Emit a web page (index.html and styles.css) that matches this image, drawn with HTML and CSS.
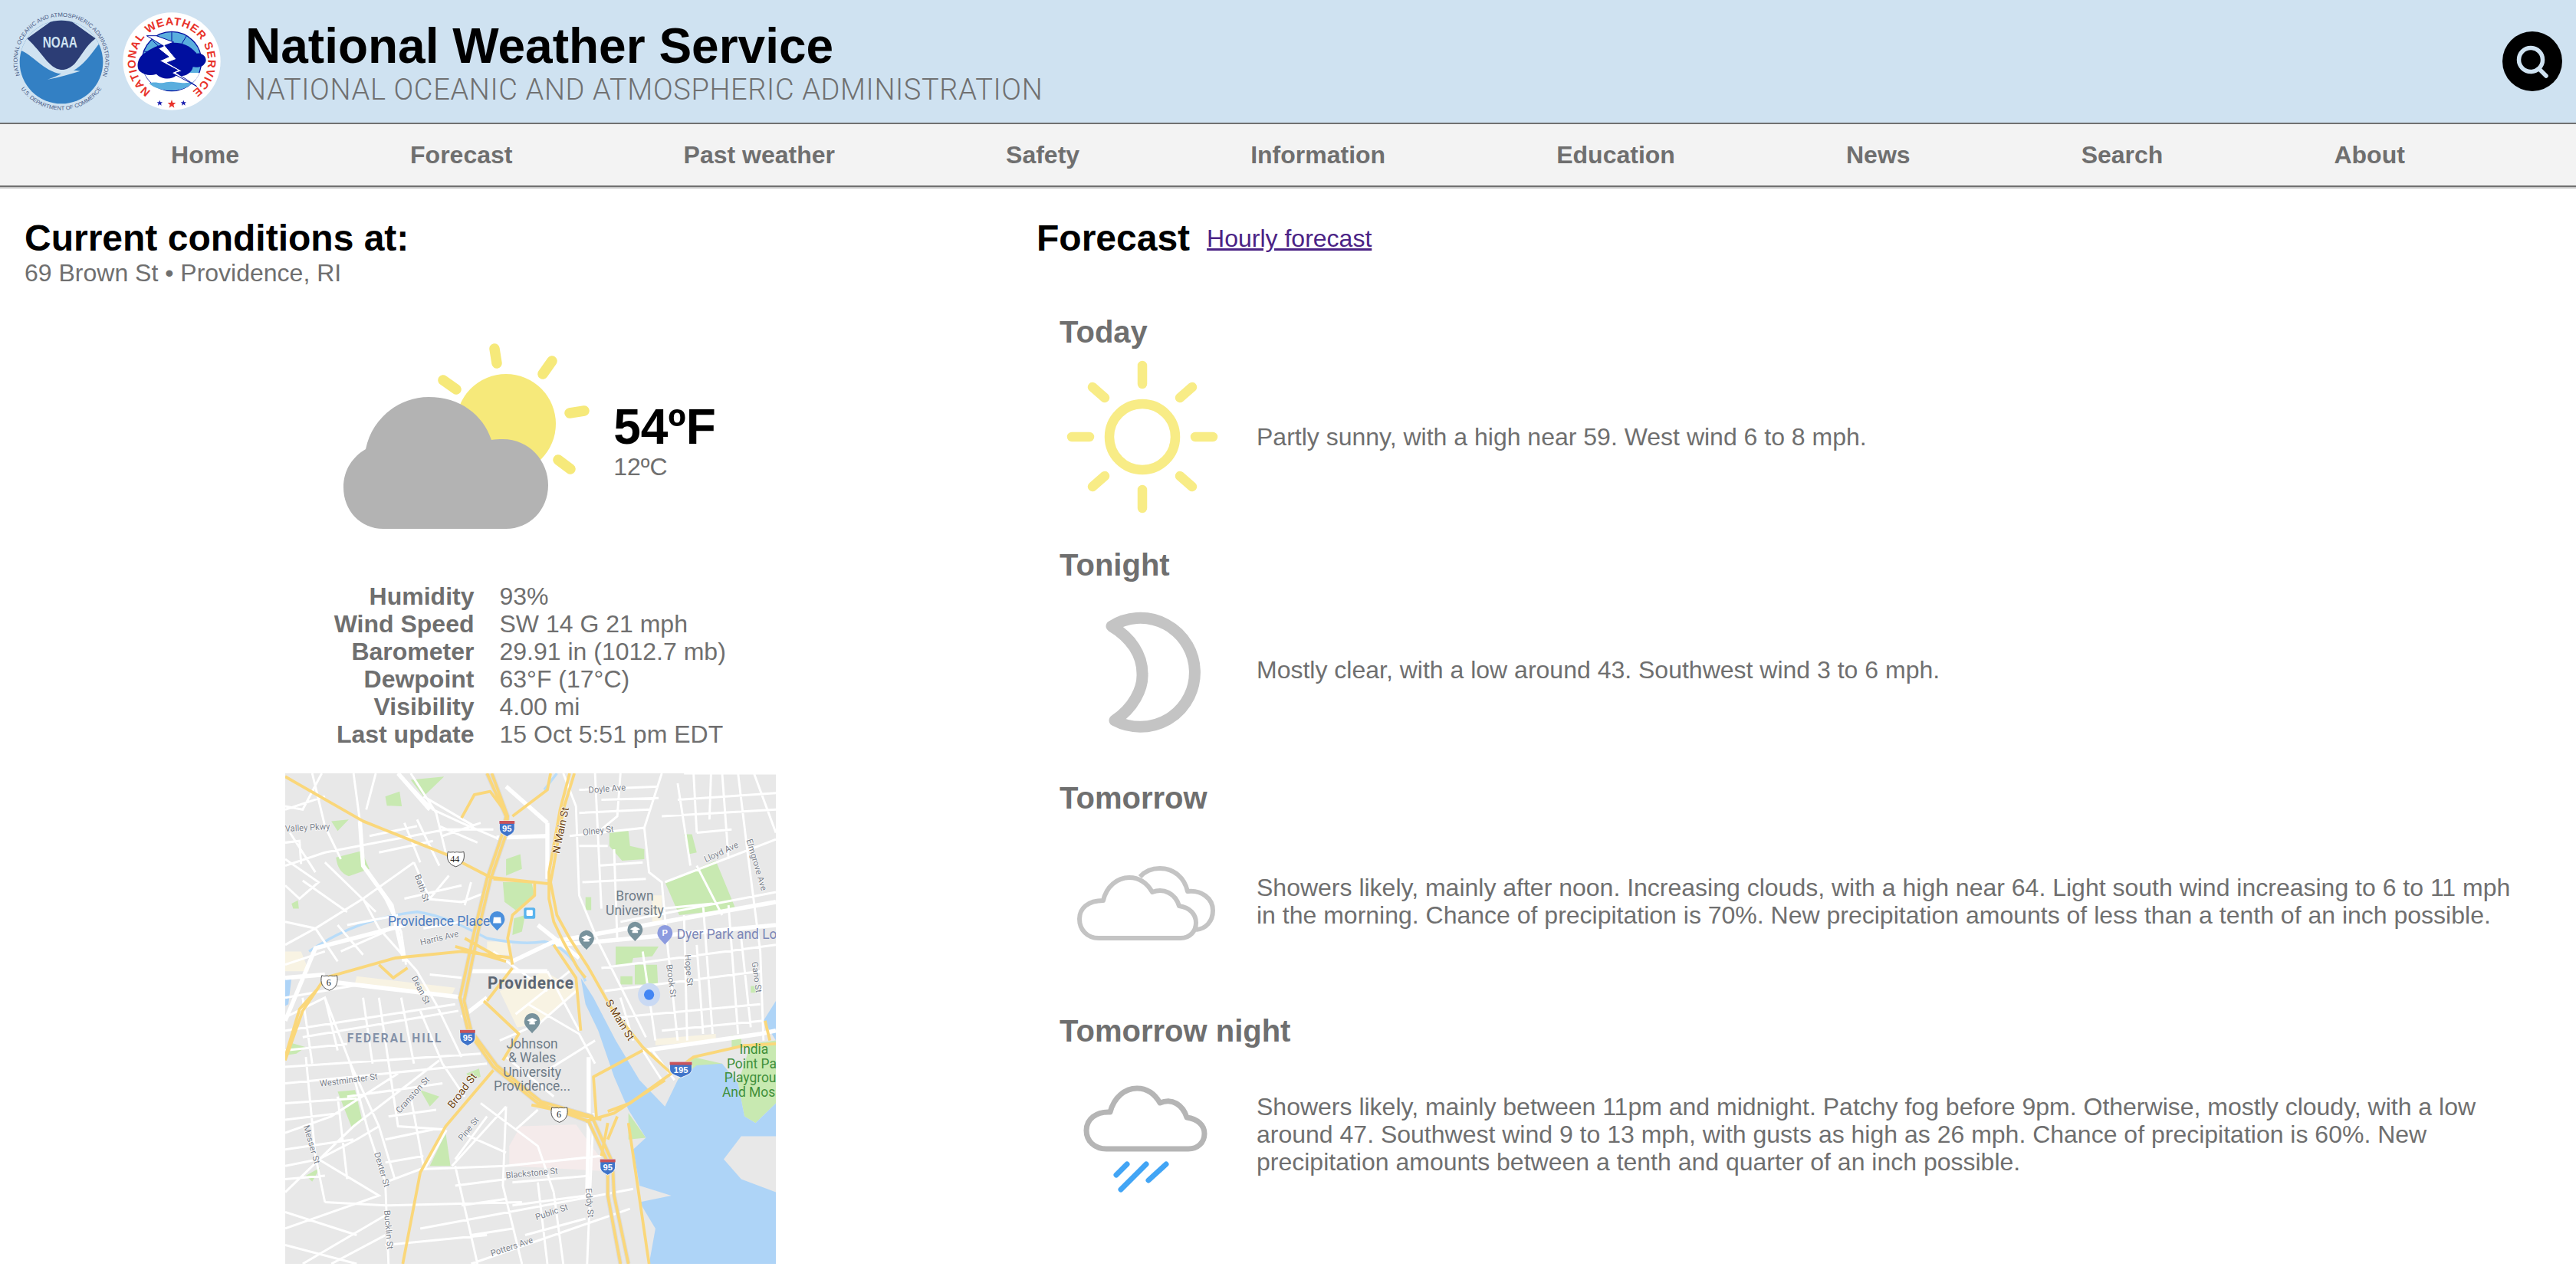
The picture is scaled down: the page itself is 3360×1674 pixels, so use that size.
FILE: index.html
```html
<!DOCTYPE html>
<html lang="en">
<head>
    <meta charset="UTF-8">
    <meta name="viewport" content="width=device-width, initial-scale=1.0">
    <title>National Weather Service</title>
    <link rel="stylesheet" href="styles.css">
</head>
<body>
    <!-- Blue banner with the two seals -->
    <header class="banner">
        <svg class="logo-noaa" viewBox="30 25 420 420">
            <defs>
                <path id="noaaTop" d="M78 290 A172 172 0 1 1 402 290"/>
                <path id="noaaBottom" d="M65 310 A190 190 0 0 0 415 310"/>
                <clipPath id="noaaDisc"><circle cx="240" cy="238" r="163"/></clipPath>
            </defs>
            <g clip-path="url(#noaaDisc)">
                <rect class="noaa-blue" x="60" y="60" width="360" height="360"/>
                <path class="noaa-light" d="M70 200 L80 192 C125 205 170 275 240 284 C310 280 350 215 388 166 L420 60 L60 60Z"/>
                <path class="noaa-navy" d="M106 146 L240 50 L374 146 C335 175 318 215 292 245 C275 262 255 270 238 268 C190 262 170 205 106 146Z"/>
                <path class="noaa-light" d="M186 306 C230 298 275 285 314 273 L272 268 L240 283 C225 292 205 300 186 306Z"/>
            </g>
            <text class="noaa-name" x="235" y="182" textLength="136" lengthAdjust="spacingAndGlyphs">NOAA</text>
            <text class="noaa-ring"><textPath href="#noaaTop" textLength="660" lengthAdjust="spacingAndGlyphs">NATIONAL OCEANIC AND ATMOSPHERIC ADMINISTRATION</textPath></text>
            <text class="noaa-ring"><textPath href="#noaaBottom" startOffset="50%" text-anchor="middle">U.S. DEPARTMENT OF COMMERCE</textPath></text>
        </svg>
        <svg class="logo-nws" viewBox="480 48 384 384">
            <defs>
                <path id="nwsRing" d="M591 357 A142 142 0 1 1 753 357"/>
            </defs>
            <circle class="nws-white" cx="672" cy="240" r="191"/>
            <circle class="nws-sky" cx="672" cy="240" r="116"/>
            <path class="nws-white" d="M565 285 L780 285 C770 320 725 354 672 354 C620 354 578 320 565 285Z"/>
            <path class="nws-sky-flat" d="M583 326 C610 316 625 330 650 322 C680 315 700 330 755 322 C735 345 705 354 672 354 C635 354 605 345 583 326Z"/>
            <path class="nws-spoke" d="M672 124 V180 M730 140 L700 190 M596 158 L640 200 M560 200 L620 210 M785 210 L720 215"/>
            <path class="nws-navy" d="M560 212 C590 190 620 175 650 172 C690 160 740 170 770 210 C800 205 815 235 800 250 C790 265 770 265 755 262 C750 290 715 305 690 295 C670 315 630 310 612 290 C590 298 565 295 548 280 C530 265 540 225 560 212Z"/>
            <path class="nws-bolt" d="M574 140 L612 140 L680 165 L645 178 L690 232 L655 245 L712 278 L690 285 L770 338 L672 285 L695 275 L625 238 L660 222 L620 190 L640 180Z"/>
            <text class="nws-name"><textPath href="#nwsRing" textLength="720" lengthAdjust="spacing">NATIONAL WEATHER SERVICE</textPath></text>
            <path class="nws-star-blue" d="M625 392 L628 400 L636 400 L630 405 L632 413 L625 408 L618 413 L620 405 L614 400 L622 400Z"/>
            <path class="nws-star-blue" d="M718 392 L721 400 L729 400 L723 405 L725 413 L718 408 L711 413 L713 405 L707 400 L715 400Z"/>
            <path class="nws-star-red" d="M672 390 L676 402 L688 402 L679 410 L682 422 L672 415 L662 422 L665 410 L656 402 L668 402Z"/>
        </svg>
        <div class="banner-text">
            <div class="site-title">National Weather Service</div>
            <div class="site-sub">NATIONAL OCEANIC AND ATMOSPHERIC ADMINISTRATION</div>
        </div>
        <a class="search-btn" href="#">
            <svg viewBox="0 0 78 78">
                <circle class="search-disc" cx="39" cy="39" r="39"/>
                <circle class="search-glass" cx="37" cy="37" r="15.5"/>
                <path class="search-glass" d="M48 49 L57 58"/>
            </svg>
        </a>
    </header>

    <!-- Main navigation -->
    <nav class="main-nav">
        <a href="#">Home</a>
        <a href="#">Forecast</a>
        <a href="#">Past weather</a>
        <a href="#">Safety</a>
        <a href="#">Information</a>
        <a href="#">Education</a>
        <a href="#">News</a>
        <a href="#">Search</a>
        <a href="#">About</a>
    </nav>

    <main class="page">
        <!-- Current conditions column -->
        <section class="current">
            <h2>Current conditions at:</h2>
            <div class="place">69 Brown St • Providence, RI</div>

            <div class="now">
                <svg class="now-icon" viewBox="446 440 334 270">
                    <circle class="sun-fill" cx="660" cy="552" r="65"/>
                    <path class="sun-ray-big" d="M645 454 L648 473 M720 470 L708 487 M743 538 L762 535 M728 599 L744 611 M578 495 L595 507"/>
                    <path class="cloud-fill" d="M500 689 C470 689 448 665 448 635 C448 612 460 595 477 585 C485 545 520 517 559 517 C600 517 630 540 641 573 C646 572 650 572 656 572 C690 572 715 600 715 632 C715 665 690 689 660 689Z"/>
                </svg>
                <div>
                    <div class="temp-f">54ºF</div>
                    <div class="temp-c">12ºC</div>
                </div>
            </div>

            <div class="stats">
                <div class="stat-label">Humidity</div><div>93%</div>
                <div class="stat-label">Wind Speed</div><div>SW 14 G 21 mph</div>
                <div class="stat-label">Barometer</div><div>29.91 in (1012.7 mb)</div>
                <div class="stat-label">Dewpoint</div><div>63°F (17°C)</div>
                <div class="stat-label">Visibility</div><div>4.00 mi</div>
                <div class="stat-label">Last update</div><div>15 Oct 5:51 pm EDT</div>
            </div>

            <svg class="map" viewBox="5 20 1544 1487" preserveAspectRatio="none">
                <rect class="map-land" x="5" y="20" width="1544" height="1487"/>
                <!-- parks -->
                <path class="map-park" d="M400 40 L505 30 L440 90Z M320 90 L365 75 L372 120 L325 118Z M165 275 L245 255 L270 310 L205 332 Q170 320 165 275Z M150 165 L205 160 L170 195Z M25 415 L45 405 L48 430 L30 430Z M700 280 L745 265 L750 310 L700 330Z M690 350 L780 350 L790 390 L730 435 L695 410Z M725 460 L760 450 L750 500 L720 510Z M950 395 L968 395 L968 435 L950 435Z M1025 195 L1085 195 L1090 240 L1135 250 L1135 280 L1065 285 L1025 240Z M1260 205 L1285 205 L1300 260 L1275 265Z M1200 350 L1360 285 L1422 430 L1245 450Z M1045 545 L1180 545 L1160 575 L1100 580 L1095 600 L1045 600Z M1105 600 L1175 600 L1178 660 L1105 660Z M1060 635 L1098 635 L1098 660 L1060 660Z M1470 665 L1490 665 L1490 685 L1470 685Z M15 835 L70 850 L40 870 L5 875Z M170 985 L225 980 L248 1075 L215 1095Z M430 980 L490 1000 L460 1030Z M575 930 L615 915 L620 940 L590 950Z M1085 1050 L1140 1125 L1085 1130Z M460 1210 L510 1110 L525 1210Z M70 1240 L115 1215 L90 1258Z M1410 815 L1440 815 L1440 850 L1410 850Z M1290 880 L1380 900 L1300 935 L1240 950Z M1470 840 L1549 830 L1549 1020 L1485 1080 L1450 1060 L1430 960Z"/>
                <!-- downtown and campus tint -->
                <path class="map-tint" d="M5 560 L55 560 L80 620 L5 620Z M230 635 L540 670 L530 690 L225 655Z M640 530 L720 530 L710 570 L640 570Z M680 680 L820 620 L930 680 L800 780 L735 790Z M1160 390 L1190 390 L1190 470 L1160 470Z M1170 825 L1360 810 L1360 830 L1170 845Z"/>
                <path class="map-pink" d="M745 1090 L920 1085 L1000 1190 L1000 1225 L710 1210 L710 1150Z"/>
                <!-- water -->
                <path class="map-water" d="M935 640 L975 700 L1045 830 L1120 950 L1200 1030 L1240 950 L1300 905 L1380 900 L1430 960 L1450 1060 L1485 1080 L1549 1020 L1549 1120 L1440 1120 L1385 1190 L1440 1250 L1549 1290 L1549 1507 L1150 1507 L1170 1400 L1120 1320 L1220 1300 L1120 1270 L1100 1160 L1140 1125 L1085 1040 L1040 940 L990 800 L950 720Z M1549 710 L1510 770 L1549 830Z M5 640 L25 640 L15 720 L5 725Z"/>
                <path class="map-land-shape" d="M1420 1200 L1480 1200 L1480 1235 L1430 1230Z"/>
                <path class="map-river" d="M80 560 C200 480 320 450 420 440 C500 450 580 490 640 520 C700 530 760 540 820 530 C880 540 920 590 950 650 M820 70 L860 20"/>
                <!-- ordinary streets -->
                <path class="map-street" d="M5 280 L110 350 L50 400 L5 360 M5 230 L50 225 L55 295 M120 20 L60 130 L5 120 M220 20 L240 165 L250 300 L320 400 L370 500 L385 600 M290 20 L260 130 M360 20 L470 130 L560 170 L680 220 M400 20 L480 140 L510 260 M5 300 L130 260 L510 190 L660 190 M5 470 L100 490 L250 400 L410 290 M60 345 L200 440 M130 290 L290 440 M250 400 L300 490 M410 290 L460 400 L520 330 M440 400 L560 410 L640 380 M590 350 L570 420 M5 540 L100 490 L170 590 M170 480 L250 570 M300 490 L420 620 L480 720 L560 880 M5 700 L240 660 L560 700 M5 760 L130 700 L210 900 L300 1090 L350 1250 M60 820 L550 740 M5 910 L620 870 M5 960 L320 930 L640 900 M5 1020 L230 1005 M70 880 L100 1180 L130 1320 M130 700 L170 860 M210 900 L265 1100 L320 1260 L330 1507 M300 700 L360 1090 L510 1100 M430 740 L500 900 L570 1000 M5 1110 L150 1060 L360 930 M5 1210 L110 1190 L300 1300 L5 1400 M5 1290 L220 1090 L490 890 M5 1350 L230 1420 M5 1450 L230 1507 M110 1190 L230 1130 L300 1090 M130 1320 L320 1330 L750 1320 M60 1507 L320 1360 M150 1507 L320 1420 M320 1450 L640 1420 M320 1260 L430 1220 L700 1210 L1000 1180 M540 1210 L610 1507 M700 1030 L690 1270 L750 1507 M620 1020 L800 1150 L850 1290 M640 1060 L540 1190 M700 1030 L530 1210 M560 1110 L700 1170 M730 1100 L800 1040 M430 1400 L1100 1280 M590 1507 L1090 1340 M850 1290 L880 1507 M700 880 L850 1000 M770 720 L930 810 L980 900 M830 620 L930 800 M730 750 L900 620 M780 800 L920 680 M680 830 L800 780 M830 920 L980 830 M660 560 L830 680 M880 20 L920 120 L930 390 L990 530 L1140 820 M1060 20 L1050 150 L1000 190 M930 70 L1180 60 M900 210 L1135 185 L1190 20 M1135 185 L1150 320 L1190 350 L1210 560 L1240 830 M1290 20 L1300 200 M1345 20 L1340 160 M1430 20 L1460 260 L1500 560 L1510 830 M1200 350 L1549 220 M1260 20 L1549 20 M1240 100 L1549 80 M1190 150 L1549 130 M1300 200 L1410 190 M990 300 L1130 290 M940 350 L1140 340 M930 240 L1020 240 M980 20 L1000 430 M1040 250 L1050 530 M1260 450 L1270 830 M1320 420 L1350 810 M1400 420 L1430 810 M1060 470 L1549 380 M1000 610 L1549 540 M1010 680 L1500 620 M1050 760 L1500 720 M1190 430 L1350 415 M1190 800 L1510 770 M1130 860 L1190 950 M1160 860 L1230 950 M975 1050 L955 1507 M5 800 L540 720 M5 860 L200 840 M200 1000 L500 960 M5 1070 L180 1050 M330 1060 L480 1040 M5 1160 L220 1130 M320 1130 L470 1100 M5 1250 L130 1240 M320 1200 L440 1180 M60 700 L90 900 M250 700 L280 900 M370 700 L410 900 M170 1000 L200 1250 M400 1000 L440 1210 M540 1270 L700 1250 M560 1330 L700 1310 M590 1420 L720 1400 M720 1260 L960 1240 M720 1330 L950 1300 M760 1420 L950 1370 M800 1260 L830 1507 M1000 100 L1180 95 M930 140 L1150 130 M1240 50 L1280 300 M1380 20 L1400 280 M1480 20 L1549 200 M1300 300 L1380 450 M1060 700 L1100 830 M1130 560 L1170 830 M1300 540 L1320 810 M1440 520 L1470 790 M5 130 L130 90 M90 20 L130 180 L180 280 M420 160 L490 300 M490 180 L610 230 M500 210 L620 170 M440 90 L600 180 M380 170 L430 290 M270 210 L420 180 M300 260 L470 225 M20 200 L100 320 M5 600 L130 560 M200 480 L360 450 M380 400 L560 360 M440 490 L560 470 M460 630 L560 640 M180 560 L320 500"/>
                <!-- wider city roads -->
                <path class="map-road" d="M240 165 L250 300 L340 420 L380 590 M670 215 L830 210 L830 340 M700 60 L830 170 M5 640 L130 630 M130 650 L570 700 M590 620 L830 620 M560 760 L640 700 M380 480 L100 550 L5 770 M800 480 L930 580 M720 590 L850 530 L1549 410 M850 540 L990 530 L1549 480 M460 130 L360 20 M830 170 L830 210 M1140 860 L1500 810 L1549 800 M960 880 L960 1100 L955 1300 M510 1100 L440 1220"/>
                <!-- highways -->
                <path class="map-hw-edge" d="M640 20 L700 150 L690 200 L640 340 L600 500 L555 700 L580 800 L660 910 L800 1020 L960 1075 L1020 1200 L1020 1300 L1060 1507 M655 20 L705 150 L700 205 L650 345 L612 500 L568 710 L590 800 L670 905 L810 1015 L970 1060 L1035 1200 L1040 1300 L1085 1507"/>
                <path class="map-hw" d="M640 20 L700 150 L690 200 L640 340 L600 500 L555 700 L580 800 L660 910 L800 1020 L960 1075 L1020 1200 L1020 1300 L1060 1507 M655 20 L705 150 L700 205 L650 345 L612 500 L568 710 L590 800 L670 905 L810 1015 L970 1060 L1035 1200 L1040 1300 L1085 1507 M915 20 L880 130 L850 300 L840 350 L860 450 L900 520 L960 610 L1030 730 L1130 850 L1220 930 M900 20 L870 130 L835 320 L835 400 L850 470 L880 530 L925 610 L950 640 M1085 1080 L1150 1507 M5 30 L250 165 L510 265 L650 335 L835 355 M5 890 L60 740 L130 640 L350 580 L560 560 L720 580 M5 880 L50 735 L110 670 M300 600 L345 640 L390 610 M375 1507 L430 1230 L510 1090 L660 920 M1020 1045 L1090 1020 L1220 930 L1290 880 L1450 845 L1549 840 M985 1070 L975 940 L1130 860 M950 1075 L1040 1050 L1120 1000 L1200 950 M630 710 L740 810 L690 890 M720 610 L640 710 M660 340 L790 350 L790 390 L720 450 L705 520 L720 600 M840 20 L830 70 L720 150 M560 155 L600 85 L650 75 L700 140 M850 540 L920 640 L935 800 M540 545 L700 590 M570 520 L680 580 M1020 1080 L1000 1180 M1050 1060 L1020 1130 M780 1025 L1000 1070 M1515 770 L1530 830"/>
                <!-- labels -->
                <text class="map-label" x="5" y="197" transform="rotate(-3 5 197)">Valley Pkwy</text>
                <text class="map-label" x="960" y="80" transform="rotate(-4 960 80)">Doyle Ave</text>
                <text class="map-label" x="942" y="208" transform="rotate(-6 942 208)">Olney St</text>
                <text class="map-label" x="1328" y="290" transform="rotate(-24 1328 290)">Lloyd Ave</text>
                <text class="map-label" x="1456" y="222" transform="rotate(73 1456 222)">Elmgrove Ave</text>
                <text class="map-label" x="412" y="330" transform="rotate(70 412 330)">Bath St</text>
                <text class="map-label" x="432" y="542" transform="rotate(-13 432 542)">Harris Ave</text>
                <text class="map-label" x="402" y="640" transform="rotate(62 402 640)">Dean St</text>
                <text class="map-label" x="1204" y="600" transform="rotate(82 1204 600)">Brook St</text>
                <text class="map-label" x="1262" y="570" transform="rotate(85 1262 570)">Hope St</text>
                <text class="map-label" x="1473" y="592" transform="rotate(82 1473 592)">Gano St</text>
                <text class="map-label" x="115" y="970" transform="rotate(-7 115 970)">Westminster St</text>
                <text class="map-label" x="365" y="1052" transform="rotate(-47 365 1052)">Cranston St</text>
                <text class="map-label" x="62" y="1090" transform="rotate(73 62 1090)">Messer St</text>
                <text class="map-label" x="285" y="1172" transform="rotate(73 285 1172)">Dexter St</text>
                <text class="map-label" x="316" y="1345" transform="rotate(85 316 1345)">Bucklin St</text>
                <text class="map-label" x="562" y="1136" transform="rotate(-50 562 1136)">Pine St</text>
                <text class="map-label" x="700" y="1248" transform="rotate(-5 700 1248)">Blackstone St</text>
                <text class="map-label" x="796" y="1375" transform="rotate(-18 796 1375)">Public St</text>
                <text class="map-label" x="655" y="1485" transform="rotate(-18 655 1485)">Potters Ave</text>
                <text class="map-label" x="950" y="1278" transform="rotate(85 950 1278)">Eddy St</text>
                <text class="map-road-label" x="868" y="265" transform="rotate(-78 868 265)">N Main St</text>
                <text class="map-road-label" x="1012" y="715" transform="rotate(58 1012 715)">S Main St</text>
                <text class="map-road-label" x="532" y="1038" transform="rotate(-52 532 1038)">Broad St</text>
                <text class="map-city" x="642" y="672">Providence</text>
                <text class="map-district" x="200" y="836">FEDERAL HILL</text>
                <text class="map-poi-blue" x="328" y="482">Providence Place</text>
                <text class="map-poi-gray" x="1105" y="405">Brown</text>
                <text class="map-poi-gray" x="1105" y="449">University</text>
                <text class="map-poi-gray" x="782" y="855">Johnson</text>
                <text class="map-poi-gray" x="782" y="897">&amp; Wales</text>
                <text class="map-poi-gray" x="782" y="941">University</text>
                <text class="map-poi-gray" x="782" y="983">Providence...</text>
                <text class="map-poi-violet" x="1237" y="522">Dyer Park and Loc</text>
                <text class="map-poi-green" x="1480" y="870">India</text>
                <text class="map-poi-green" x="1480" y="914">Point Par</text>
                <text class="map-poi-green" x="1480" y="957">Playgroun</text>
                <text class="map-poi-green" x="1480" y="1000">And Mosai</text>
                <!-- shields -->
                <g transform="translate(703 186)"><path class="shield-blue" d="M-24 -22 H24 V0 C24 16 10 20 0 26 C-10 20 -24 16 -24 0Z"/><path class="shield-red" d="M-24 -22 H24 V-13 H-24Z"/><text class="shield-num" y="11">95</text></g>
                <g transform="translate(579 820)"><path class="shield-blue" d="M-24 -22 H24 V0 C24 16 10 20 0 26 C-10 20 -24 16 -24 0Z"/><path class="shield-red" d="M-24 -22 H24 V-13 H-24Z"/><text class="shield-num" y="11">95</text></g>
                <g transform="translate(1020 1212)"><path class="shield-blue" d="M-24 -22 H24 V0 C24 16 10 20 0 26 C-10 20 -24 16 -24 0Z"/><path class="shield-red" d="M-24 -22 H24 V-13 H-24Z"/><text class="shield-num" y="11">95</text></g>
                <g transform="translate(1250 917)"><path class="shield-blue" d="M-35 -22 H35 V0 C35 16 12 20 0 26 C-12 20 -35 16 -35 0Z"/><path class="shield-red" d="M-35 -22 H35 V-13 H-35Z"/><text class="shield-num" y="11">195</text></g>
                <g transform="translate(539 280)"><path class="shield-white" d="M-22 -22 C-12 -18 -6 -24 0 -20 C6 -24 12 -18 28 -22 C32 0 26 16 3 23 C-20 16 -28 0 -22 -22Z"/><text class="shield-us" y="9">44</text></g>
                <g transform="translate(142 655)"><path class="shield-white" d="M-22 -22 C-12 -18 -6 -24 0 -20 C6 -24 12 -18 26 -22 C30 0 24 16 2 23 C-20 16 -28 0 -22 -22Z"/><text class="shield-us" y="9">6</text></g>
                <g transform="translate(866 1055)"><path class="shield-white" d="M-22 -22 C-12 -18 -6 -24 0 -20 C6 -24 12 -18 26 -22 C30 0 24 16 2 23 C-20 16 -28 0 -22 -22Z"/><text class="shield-us" y="9">6</text></g>
                <!-- pins -->
                <path class="pin-blue" d="M672 438 A24 24 0 0 1 696 462 C696 476 682 486 672 497 C662 486 648 476 648 462 A24 24 0 0 1 672 438Z"/>
                <path class="pin-mark" d="M661 456 H683 L685 474 H659Z"/>
                <rect class="pin-transit" x="756" y="427" width="36" height="34" rx="6"/>
                <rect class="pin-mark" x="764" y="434" width="20" height="18" rx="3"/>
                <path class="pin-teal" d="M953 496 A24 24 0 0 1 977 520 C977 534 963 544 953 555 C943 544 929 534 929 520 A24 24 0 0 1 953 496Z"/>
                <path class="pin-mark" d="M953 510 L969 518 L953 526 L937 518Z M944 524 H962 V530 H944Z"/>
                <path class="pin-teal" d="M1106 470 A24 24 0 0 1 1130 494 C1130 508 1116 518 1106 529 C1096 518 1082 508 1082 494 A24 24 0 0 1 1106 470Z"/>
                <path class="pin-mark" d="M1106 484 L1122 492 L1106 500 L1090 492Z M1097 498 H1115 V504 H1097Z"/>
                <path class="pin-teal" d="M782 747 A25 25 0 0 1 807 772 C807 786 792 796 782 808 C772 796 757 786 757 772 A25 25 0 0 1 782 747Z"/>
                <path class="pin-mark" d="M782 761 L798 769 L782 777 L766 769Z M773 775 H791 V781 H773Z"/>
                <path class="pin-violet" d="M1200 480 A24 24 0 0 1 1224 504 C1224 518 1210 528 1200 539 C1190 528 1176 518 1176 504 A24 24 0 0 1 1200 480Z"/>
                <text class="pin-p" x="1200" y="513">P</text>
                <circle class="here-halo" cx="1150" cy="691" r="35"/>
                <circle class="here-dot" cx="1150" cy="691" r="16"/>
            </svg>
        </section>

        <!-- Forecast column -->
        <section class="forecast">
            <div class="forecast-head">
                <h2>Forecast</h2>
                <a class="hourly" href="#">Hourly forecast</a>
            </div>

            <div class="period">
                <h3>Today</h3>
                <div class="period-row">
                    <svg class="period-icon" viewBox="0 0 200 200">
                        <circle class="line-sun" cx="100" cy="100" r="43"/>
                        <path class="line-sun" d="M100 7 V31 M100 169 V193 M8 100 H31 M169 100 H192 M35 35 L51 49 M165 35 L149 49 M35 165 L51 151 M165 165 L149 151"/>
                    </svg>
                    <p>Partly sunny, with a high near 59. West wind 6 to 8 mph.</p>
                </div>
            </div>

            <div class="period">
                <h3>Tonight</h3>
                <div class="period-row">
                    <svg class="period-icon" viewBox="0 0 200 200">
                        <path class="line-moon" d="M60 43 A71 71 0 1 1 64 166 C88 150 101 125 100 105 C100 80 85 58 60 43Z"/>
                    </svg>
                    <p>Mostly clear, with a low around 43. Southwest wind 3 to 6 mph.</p>
                </div>
            </div>

            <div class="period">
                <h3>Tomorrow</h3>
                <div class="period-row">
                    <svg class="period-icon" viewBox="0 0 200 200">
                        <path class="line-cloud" d="M43 146 C28 146 18 135 18 121 C18 107 29 97 49 97 C53 79 67 67 83 67 C96 67 106 74 113 86 C128 80 143 88 148 104 C162 106 170 115 170 126 C170 137 162 146 150 146Z"/>
                        <path class="line-cloud" d="M97 66 C104 58 113 55 123 55 C141 55 155 67 159 85 C177 83 192 94 192 110 C192 124 183 134 170 135"/>
                    </svg>
                    <p class="nudge-up">Showers likely, mainly after noon. Increasing clouds, with a high near 64. Light south wind increasing to 6 to 11 mph<br>in the morning. Chance of precipitation is 70%. New precipitation amounts of less than a tenth of an inch possible.</p>
                </div>
            </div>

            <div class="period">
                <h3>Tomorrow night</h3>
                <div class="period-row">
                    <svg class="period-icon" viewBox="0 0 200 200">
                        <path class="line-rain-cloud" d="M53 117 C38 117 27 107 27 93 C27 78 40 68 58 69 C63 50 77 38 93 38 C106 38 116 45 123 57 C139 50 153 60 158 76 C172 78 181 86 181 97 C181 109 172 117 160 117Z"/>
                        <path class="line-rain" d="M66 151 L80 137 M72 170 L105 137 M108 158 L131 137"/>
                    </svg>
                    <p class="nudge-up">Showers likely, mainly between 11pm and midnight. Patchy fog before 9pm. Otherwise, mostly cloudy, with a low<br>around 47. Southwest wind 9 to 13 mph, with gusts as high as 26 mph. Chance of precipitation is 60%. New<br>precipitation amounts between a tenth and quarter of an inch possible.</p>
                </div>
            </div>
        </section>
    </main>
</body>
</html>
```

FILE: styles.css
```css
/* Page basics */
body {
    margin: 0;
    font-family: "Liberation Sans", Arial, sans-serif;
    font-size: 32px;
    line-height: 36px;
    color: #6f6f6f;
    background-color: white;
}

h2, h3, p {
    margin: 0;
}

/* Top banner */
.banner {
    display: flex;
    align-items: center;
    height: 160px;
    padding: 0 18px 0 10px;
    background-color: #cfe2f1;
    border-bottom: 2px solid #707070;
}

.logo-noaa {
    width: 140px;
    height: 140px;
    margin-right: 10px;
}

.logo-nws {
    width: 128px;
    height: 128px;
    margin-right: 32px;
}

.banner-text {
    margin-top: 4px;
}

.site-title {
    font-size: 64px;
    line-height: 70px;
    font-weight: bold;
    color: black;
}

.site-sub {
    font-family: Roboto, "Liberation Sans", sans-serif;
    font-size: 38px;
    line-height: 44px;
    font-weight: 300;
    letter-spacing: 0.65px;
    color: #707070;
}

.search-btn {
    display: block;
    width: 78px;
    height: 78px;
    margin-left: auto;
}

.search-disc {
    fill: black;
}

.search-glass {
    fill: none;
    stroke: #cfe2f1;
    stroke-width: 5.5;
    stroke-linecap: round;
}

/* NOAA seal */
.noaa-blue { fill: #3380c4; }
.noaa-light { fill: #cfe2f1; }
.noaa-navy { fill: #2c3d75; }

.noaa-name {
    font-family: "Liberation Sans", sans-serif;
    font-size: 60px;
    font-weight: bold;
    fill: #cfe2f1;
    text-anchor: middle;
}

.noaa-ring {
    font-family: "Liberation Sans", sans-serif;
    font-size: 22px;
    fill: #4a5a85;
}

/* NWS seal */
.nws-white { fill: white; }
.nws-sky { fill: #5aaede; stroke: #000f9f; stroke-width: 4; }
.nws-sky-flat { fill: #5aaede; }
.nws-spoke { fill: none; stroke: #000f9f; stroke-width: 3; }
.nws-navy { fill: #000f9f; }
.nws-bolt { fill: white; stroke: #000f9f; stroke-width: 3; }
.nws-star-blue { fill: #1a1fb0; }
.nws-star-red { fill: #e8322a; }

.nws-name {
    font-family: "Liberation Sans", sans-serif;
    font-size: 44px;
    font-weight: bold;
    fill: #e8322a;
}

/* Navigation bar */
.main-nav {
    display: flex;
    justify-content: space-evenly;
    align-items: center;
    height: 80px;
    background-color: #f3f3f3;
    border-bottom: 2px solid #707070;
    box-shadow: 0 2px 0 #c8c8c8;
}

.main-nav a {
    font-weight: bold;
    color: #6f6f6f;
    text-decoration: none;
}

/* Two column layout */
.page {
    display: grid;
    grid-template-columns: 1352px 1fr;
}

h2 {
    font-size: 48px;
    line-height: 54px;
    font-weight: bold;
    color: black;
}

/* Current conditions */
.current {
    padding: 40px 0 0 32px;
}

.now {
    display: flex;
    align-items: flex-start;
    justify-content: center;
    gap: 20px;
    margin: 67px 4px 0 0;
}

.now-icon {
    display: block;
    width: 334px;
    height: 270px;
}

.temp-f {
    margin-top: 80px;
    font-size: 64px;
    line-height: 72px;
    font-weight: bold;
    color: black;
}

.temp-c {
    margin-top: -2px;
}

.sun-fill { fill: #f6e97a; }

.sun-ray-big {
    fill: none;
    stroke: #f6e97a;
    stroke-width: 13.5;
    stroke-linecap: round;
}

.cloud-fill { fill: #b3b3b3; }

.stats {
    display: grid;
    grid-template-columns: 186px 300px;
    column-gap: 33px;
    justify-content: center;
    margin-top: 49px;
}

.stat-label {
    font-weight: bold;
    text-align: right;
}

/* Map picture */
.map {
    display: block;
    width: 640px;
    height: 640px;
    margin: 33px auto 0;
}

.map-land { fill: #e8e8e8; }
.map-park { fill: #c8e9b1; }
.map-tint { fill: #f8f3e3; }
.map-pink { fill: #f5ebeb; }
.map-water { fill: #aed4f7; }
.map-land-shape { fill: #e8e8e8; }

.map-river {
    fill: none;
    stroke: #b8dcf9;
    stroke-width: 8;
}

.map-street {
    fill: none;
    stroke: white;
    stroke-width: 7;
}

.map-road {
    fill: none;
    stroke: white;
    stroke-width: 13;
}

.map-hw-edge {
    fill: none;
    stroke: #dcdcdc;
    stroke-width: 14;
}

.map-hw {
    fill: none;
    stroke: #fad77a;
    stroke-width: 9;
    stroke-linejoin: round;
}

.map-label,
.map-road-label,
.map-city,
.map-district,
.map-poi-blue,
.map-poi-gray,
.map-poi-violet,
.map-poi-green {
    font-family: Roboto, "Liberation Sans", sans-serif;
}

.map-label {
    font-size: 27px;
    fill: #79808a;
    stroke: white;
    stroke-width: 3px;
    paint-order: stroke;
}

.map-road-label {
    font-size: 33px;
    fill: #6b3f10;
    stroke: white;
    stroke-width: 3px;
    paint-order: stroke;
}

.map-city {
    font-size: 50px;
    font-weight: bold;
    letter-spacing: 2px;
    fill: #5c6673;
}

.map-district {
    font-size: 37px;
    font-weight: bold;
    letter-spacing: 5px;
    fill: #8391a8;
}

.map-poi-blue {
    font-size: 42px;
    fill: #4d7cc2;
}

.map-poi-gray {
    font-size: 42px;
    fill: #6f7c88;
    text-anchor: middle;
}

.map-poi-violet {
    font-size: 42px;
    fill: #7c87b8;
}

.map-poi-green {
    font-size: 42px;
    fill: #3f8f3a;
    text-anchor: middle;
}

.shield-blue { fill: #3f74c9; stroke: white; stroke-width: 2; }
.shield-red { fill: #c9545a; }
.shield-white { fill: white; stroke: #333; stroke-width: 2; }

.shield-num {
    font-family: "Liberation Sans", sans-serif;
    font-size: 27px;
    font-weight: bold;
    fill: white;
    text-anchor: middle;
}

.shield-us {
    font-family: "Liberation Serif", serif;
    font-size: 29px;
    fill: #222;
    text-anchor: middle;
}

.pin-blue { fill: #4a8fdc; }
.pin-teal { fill: #78929c; }
.pin-violet { fill: #8c9bdf; }
.pin-transit { fill: #5ab4ee; }
.pin-mark { fill: white; }

.pin-p {
    font-family: "Liberation Sans", sans-serif;
    font-size: 27px;
    font-weight: bold;
    fill: white;
    text-anchor: middle;
}

.here-halo { fill: #c9d9f3; }
.here-dot { fill: #4285f4; }

/* Forecast column */
.forecast {
    padding-top: 40px;
}

.forecast-head {
    display: flex;
    align-items: center;
    gap: 22px;
    margin-bottom: 72px;
}

.hourly {
    color: #4b2385;
}

.period {
    margin-left: 30px;
    height: 304px;
}

h3 {
    font-size: 40px;
    line-height: 46px;
    font-weight: bold;
    color: #6f6f6f;
}

.period-row {
    display: flex;
    align-items: center;
    height: 228px;
}

.period-icon {
    flex: none;
    width: 200px;
    height: 200px;
    margin: 0 49px 0 8px;
}

.nudge-up {
    margin-bottom: 4px;
}

/* Outline weather icons */
.line-sun {
    fill: none;
    stroke: #f8ec86;
    stroke-width: 12.5;
    stroke-linecap: round;
}

.line-moon {
    fill: none;
    stroke: #c4c4c4;
    stroke-width: 15;
    stroke-linejoin: round;
}

.line-cloud {
    fill: none;
    stroke: #c4c4c4;
    stroke-width: 6;
    stroke-linejoin: round;
}

.line-rain-cloud {
    fill: none;
    stroke: #b5b5b5;
    stroke-width: 7;
    stroke-linejoin: round;
}

.line-rain {
    fill: none;
    stroke: #42a5f5;
    stroke-width: 7;
    stroke-linecap: round;
}
```
